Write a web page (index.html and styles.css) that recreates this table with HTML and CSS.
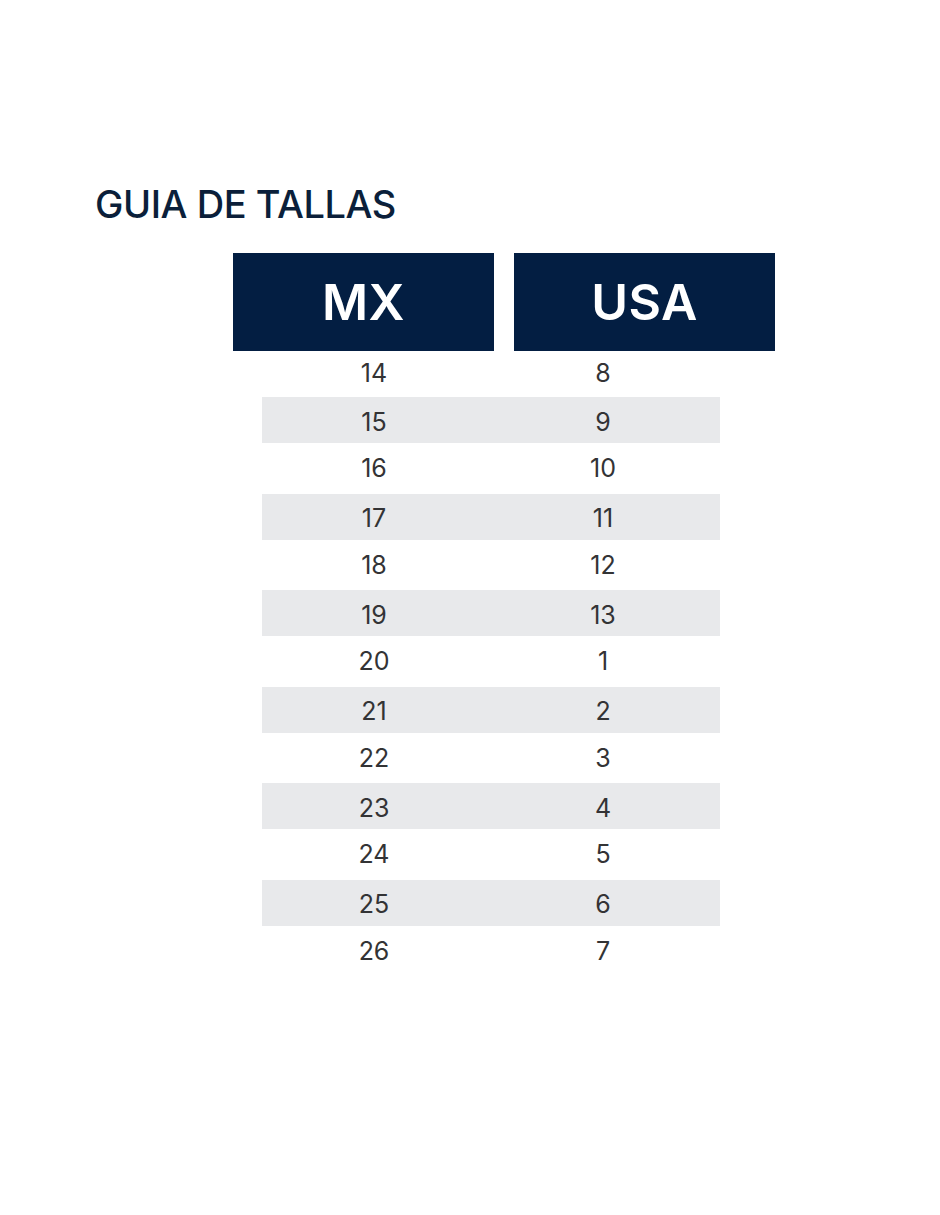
FILE: index.html
```html
<!DOCTYPE html>
<html lang="es">
<head>
<meta charset="utf-8">
<title>Guia de tallas</title>
<link rel="stylesheet" href="styles.css">
</head>
<body>
<main class="page">
  <h1 class="title">GUIA DE TALLAS</h1>
  <div class="table">
    <div class="head">
      <div class="head-cell">MX</div>
      <div class="head-cell">USA</div>
    </div>
    <div class="rows">
      <div class="row first"><span>14</span><span>8</span></div>
      <div class="row alt"><span>15</span><span>9</span></div>
      <div class="row"><span>16</span><span>10</span></div>
      <div class="row alt"><span>17</span><span>11</span></div>
      <div class="row"><span>18</span><span>12</span></div>
      <div class="row alt"><span>19</span><span>13</span></div>
      <div class="row"><span>20</span><span>1</span></div>
      <div class="row alt"><span>21</span><span>2</span></div>
      <div class="row"><span>22</span><span>3</span></div>
      <div class="row alt"><span>23</span><span>4</span></div>
      <div class="row"><span>24</span><span>5</span></div>
      <div class="row alt"><span>25</span><span>6</span></div>
      <div class="row"><span>26</span><span>7</span></div>
    </div>
  </div>
</main>
</body>
</html>
```

FILE: styles.css
```css
html, body {
  margin: 0;
  padding: 0;
  background: #ffffff;
}

body {
  font-family: Inter, "Open Sans", "Liberation Sans", sans-serif;
}

.page {
  width: 940px;
  height: 1215px;
  padding-top: 181px;
  box-sizing: border-box;
}

.title {
  margin: 0 0 26px 95px;
  font-size: 38px;
  line-height: 46px;
  font-weight: 500;
  color: #0b1f3a;
  letter-spacing: -0.45px;
}

.table {
  margin-left: 233px;
}

.head {
  display: flex;
  gap: 20px;
}

.head-cell {
  width: 261px;
  height: 98px;
  background: #031e42;
  color: #ffffff;
  font-size: 50px;
  font-weight: 600;
  display: flex;
  align-items: center;
  justify-content: center;
  letter-spacing: 0.5px;
}

.rows {
  margin-left: 29px;
  width: 458px;
}

.row {
  display: grid;
  grid-template-columns: 224px 234px;
  height: 50.5px;
  align-items: center;
  font-size: 25px;
  color: #333335;
}

.row span {
  text-align: center;
}

.row.first {
  height: 46px;
  padding-bottom: 3px;
  box-sizing: border-box;
}

.row.alt {
  height: 46px;
  background: #e8e9eb;
  padding-top: 3px;
  box-sizing: border-box;
}
```
